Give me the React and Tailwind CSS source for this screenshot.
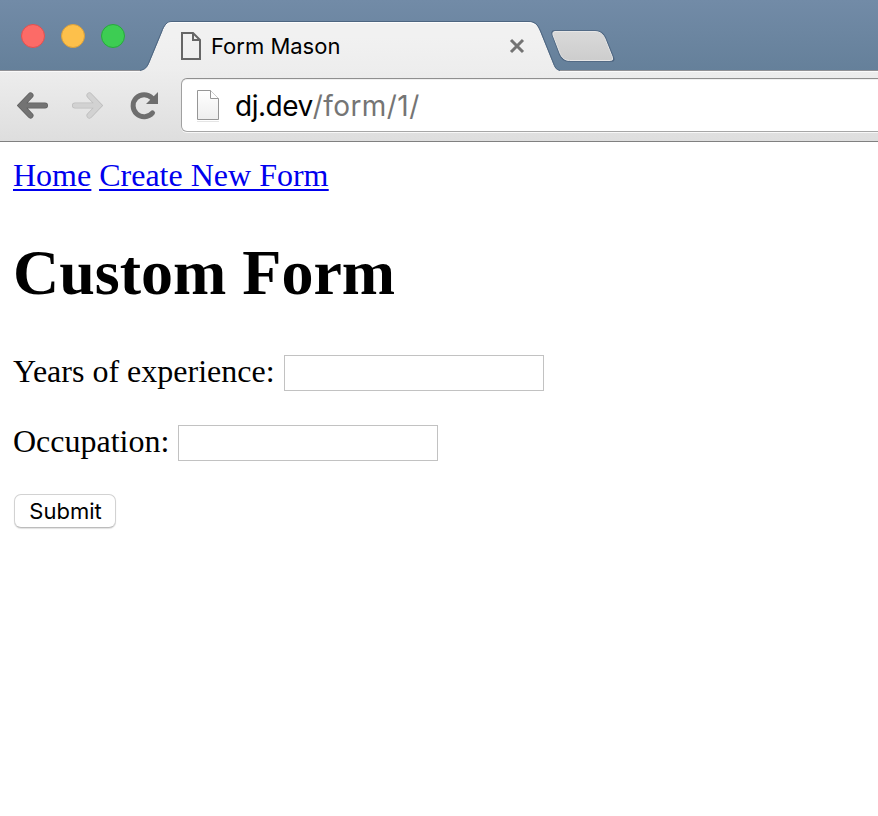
function TrafficLights() {
  return (
    <div className="ml-[21px] mt-6 flex gap-4">
      <span className="h-6 w-6 rounded-full border border-[#e2504f] bg-[#fc6b67]" />
      <span className="h-6 w-6 rounded-full border border-[#dba03a] bg-[#fdc04b]" />
      <span className="h-6 w-6 rounded-full border border-[#28a93c] bg-[#3dcd53]" />
    </div>
  );
}

function Tab() {
  return (
    <div className="relative ml-[15px] h-[72px] w-[424px]">
      <svg className="absolute inset-0" width="424" height="72" viewBox="0 0 424 72">
        <defs>
          <linearGradient id="tab" x1="0" y1="0" x2="0" y2="1">
            <stop offset="0.3" stopColor="#f1f1f1" />
            <stop offset="1" stopColor="#ededed" />
          </linearGradient>
        </defs>
        <path
          d="M0 72V70.500C5 70 7.500 67.500 10 61L22 32C24.500 25 27 22 32 22H388C395 22 397 24.500 400 31L412.500 62C415 68 416 70 420 70.500V72Z"
          fill="url(#tab)"
        />
        <path
          d="M0 70.500C5 69.500 7 67.500 9.500 61L21.500 32C24 25 27 21.500 32 21.500H388C395 21.500 397.500 24 400.500 31L413 62C415 67.500 416 69.500 420 70.500"
          fill="none"
          stroke="#4d6580"
        />
        <path d="M26 25Q28 22.500 32 22.500H387Q393 22.500 395 25" fill="none" stroke="#fdfdfd" />
      </svg>
      <div className="relative flex h-full items-start pl-[40px] pt-8">
        <svg width="22" height="28" viewBox="0 0 22 28" fill="none" stroke="#666" strokeWidth="2">
          <path d="M2 1H13L20 8V27H2Z" />
          <path d="M13 1V8H20" />
        </svg>
        <span className="ml-[9px] w-[297px] whitespace-nowrap text-[22px] leading-[29px]">
          Form Mason
        </span>
        <svg className="mt-[6px]" width="18" height="16" viewBox="0 0 18 16" stroke="#737373" strokeWidth="3">
          <path d="M3 2L15 14M15 2L3 14" />
        </svg>
      </div>
    </div>
  );
}

function NewTabButton() {
  return (
    <svg className="-ml-[14px] mt-[29px]" width="66" height="34" viewBox="0 0 66 34">
      <defs>
        <linearGradient id="newtab" x1="0" y1="0" x2="0" y2="1">
          <stop offset="0" stopColor="#d9d9d9" />
          <stop offset="1" stopColor="#cdcdcd" />
        </linearGradient>
      </defs>
      <path
        d="M4.500 1.500H45Q52.500 1.500 55.500 8L64 29Q65 32.500 61.500 32.500H19Q12.500 32.500 9.500 26L2 6Q.500 1.500 4.500 1.500Z"
        fill="#4d6580"
        stroke="#4d6580"
        strokeWidth=".6"
      />
      <path
        d="M5 2.500H45Q51.500 2.500 54.500 8.500L62.500 28.500Q63.500 31.500 60.500 31.500H19.500Q13.500 31.500 10.500 25.500L3 6Q2 2.500 5 2.500Z"
        fill="url(#newtab)"
        stroke="#e6e6e6"
      />
    </svg>
  );
}

function Arrow({ className, color, edge }) {
  return (
    <svg className={className} width="32" height="30" viewBox="0 0 32 30" fill="none" strokeLinecap="round">
      <g stroke={edge} strokeWidth="6" strokeLinejoin="miter">
        <path d="M13.500 4.500L4 14.500L13.500 24.500M6 14.500H28" />
      </g>
      <g stroke={color} strokeWidth="4.600" strokeLinejoin="miter">
        <path d="M13.500 4.500L4 14.500L13.500 24.500M6 14.500H28" />
      </g>
    </svg>
  );
}

function Toolbar() {
  return (
    <div className="flex h-[72px] items-start border-b border-t border-b-[#808080] border-t-[#909195] bg-linear-to-b from-[#ededed] to-[#dedede] shadow-[inset_0_1px_0_#fafafa]">
      <Arrow className="ml-[17px] mt-5" color="#737373" edge="#606060" />
      <Arrow className="ml-[22px] mt-5 -scale-x-100" color="#d2d2d2" edge="#bdbdbd" />
      <svg className="ml-[27px] mt-5" width="30" height="30" viewBox="0 0 30 30">
        <path d="M22.500 21.800A11 11 0 1 1 22 7" fill="none" stroke="#6e6e6e" strokeWidth="5" strokeLinecap="round" />
        <path d="M28 1V13H16Z" fill="#6e6e6e" />
      </svg>
      <div className="ml-[21px] mt-[7px] flex h-[54px] flex-1 items-start rounded-l-md border border-r-0 border-b-[#a6a6a6] border-l-[#a0a0a0] border-t-[#8f8f8f] bg-white shadow-[0_1px_0_#f8f8f8,inset_0_1px_0_#f0f0f0]">
        <svg className="ml-[14px] mt-[11px]" width="24" height="32" viewBox="0 0 24 32">
          <defs>
            <linearGradient id="page" x1="0" y1="0" x2="0" y2="1">
              <stop offset="0" stopColor="#fff" />
              <stop offset="1" stopColor="#eee" />
            </linearGradient>
          </defs>
          <path d="M1 31.500H23" stroke="#e5e5e5" />
          <path d="M1.500 .500H14.500L22.500 8.500V29.500H1.500Z" fill="url(#page)" stroke="#969696" />
          <path d="M14.500 .500V8.500H22.500" fill="#fff" stroke="#969696" />
        </svg>
        <span className="ml-[15px] mt-[7px] whitespace-nowrap text-[28px] leading-[40px] tracking-[0.45px] text-[#757575]">
          <span className="tracking-[-0.5px] text-black">dj.dev</span>/form/1/
        </span>
      </div>
    </div>
  );
}

function Field({ label }) {
  return (
    <label className="flex h-9 items-center gap-[9px]">
      <span className="relative -top-[2px] whitespace-nowrap">{label}</span>
      <input className="h-9 w-[260px] border border-[#c2c2c2] bg-white outline-none" />
    </label>
  );
}

export default function App() {
  return (
    <div className="flex h-[816px] w-[878px] flex-col overflow-hidden bg-white text-black">
      <header className="font-['Inter','Liberation_Sans',sans-serif]">
        <div className="flex h-[70px] items-start bg-linear-to-b from-[#728ba7] to-[#65809a]">
          <TrafficLights />
          <Tab />
          <NewTabButton />
        </div>
        <Toolbar />
      </header>
      <main className="flex flex-col items-start pl-[13px] font-['Liberation_Serif',serif] text-[32px] leading-9">
        <nav className="mt-[15px] flex gap-2 text-[#0000ee] underline decoration-2 underline-offset-[3px]">
          <a href="#home">Home</a>
          <a href="#create">Create New Form</a>
        </nav>
        <h1 className="mt-[44px] text-[64px] font-bold leading-[72px]">Custom Form</h1>
        <form className="mt-[46px] flex flex-col items-start">
          <Field label="Years of experience:" />
          <div className="mt-[34px]">
            <Field label="Occupation:" />
          </div>
          <button
            type="button"
            className="ml-px mt-[33px] h-[34px] w-[102px] rounded-[7px] border border-[#d2d2d2] border-b-[#bcbcbc] bg-white pl-px pt-px font-['Inter','Liberation_Sans',sans-serif] text-[22px] leading-[31px] shadow-[0_1px_1px_#e2e2e2]"
          >
            Submit
          </button>
        </form>
      </main>
    </div>
  );
}
